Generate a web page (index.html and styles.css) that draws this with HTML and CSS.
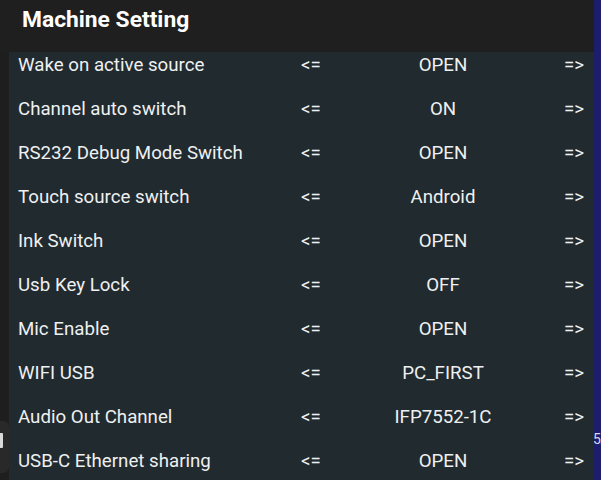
FILE: index.html
```html
<!DOCTYPE html>
<html>
<head>
<meta charset="utf-8">
<link rel="stylesheet" href="styles.css">
</head>
<body>
<div class="screen">
  <div class="main">
    <div class="header"><h1 class="title">Machine Setting</h1></div>
    <div class="body">
      <div class="side">
        <div class="handle"><span class="grip"></span></div>
      </div>
      <div class="panel">
        <div class="list">
          <div class="row"><span class="label">Wake on active source</span><span class="arrow">&lt;=</span><span class="value">OPEN</span><span class="arrow">=&gt;</span></div>
          <div class="row"><span class="label">Channel auto switch</span><span class="arrow">&lt;=</span><span class="value">ON</span><span class="arrow">=&gt;</span></div>
          <div class="row"><span class="label">RS232 Debug Mode Switch</span><span class="arrow">&lt;=</span><span class="value">OPEN</span><span class="arrow">=&gt;</span></div>
          <div class="row"><span class="label">Touch source switch</span><span class="arrow">&lt;=</span><span class="value">Android</span><span class="arrow">=&gt;</span></div>
          <div class="row"><span class="label">Ink Switch</span><span class="arrow">&lt;=</span><span class="value">OPEN</span><span class="arrow">=&gt;</span></div>
          <div class="row"><span class="label">Usb Key Lock</span><span class="arrow">&lt;=</span><span class="value">OFF</span><span class="arrow">=&gt;</span></div>
          <div class="row"><span class="label">Mic Enable</span><span class="arrow">&lt;=</span><span class="value">OPEN</span><span class="arrow">=&gt;</span></div>
          <div class="row"><span class="label">WIFI USB</span><span class="arrow">&lt;=</span><span class="value">PC_FIRST</span><span class="arrow">=&gt;</span></div>
          <div class="row"><span class="label">Audio Out Channel</span><span class="arrow">&lt;=</span><span class="value">IFP7552-1C</span><span class="arrow">=&gt;</span></div>
          <div class="row"><span class="label">USB-C Ethernet sharing</span><span class="arrow">&lt;=</span><span class="value">OPEN</span><span class="arrow">=&gt;</span></div>
        </div>
      </div>
    </div>
  </div>
  <div class="edge"><span class="edge-text">5.</span></div>
</div>
</body>
</html>
```
FILE: styles.css
```css
* { box-sizing: border-box; margin: 0; padding: 0; }
html, body { width: 601px; height: 480px; overflow: hidden; background: #201f1f; }
body { font-family: Roboto, "Noto Sans", sans-serif; color: #eef0f1; }
.screen { display: flex; width: 601px; height: 480px; }
.main { width: 594px; display: flex; flex-direction: column; }
.header { height: 52px; background: #201f1f; padding-left: 22px; display: flex; align-items: flex-start; }
.title { font-size: 22.8px; font-weight: 700; line-height: 40px; color: #ffffff; letter-spacing: 0; }
.body { flex: 1; display: flex; min-height: 0; }
.side { width: 9px; background: #1f1e1e; display: flex; flex-direction: column; padding-top: 369px; }
.handle { position: relative; width: 9px; height: 52px; background: #2a2929; border-radius: 0 6px 6px 0; }
.grip { position: absolute; left: 0; top: 12px; width: 3px; height: 15px; background: #d9d9d9; border-radius: 0 1px 1px 0; }
.panel { flex: 1; background: #212a2f; overflow: hidden; padding-left: 9px; }
.list { margin-top: -9px; }
.row { height: 44px; display: grid; grid-template-columns: 272px 42px 222px 40px; align-items: center; font-size: 18.7px; }
.label { white-space: nowrap; }
.arrow, .value { text-align: center; white-space: nowrap; }
.edge { width: 7px; background: #1c1d6c; position: relative; overflow: hidden; }
.edge-text { position: absolute; left: -1px; top: 431px; font-size: 14px; color: #d8d8e8; font-family: Roboto, sans-serif; letter-spacing: -1px; }
```
